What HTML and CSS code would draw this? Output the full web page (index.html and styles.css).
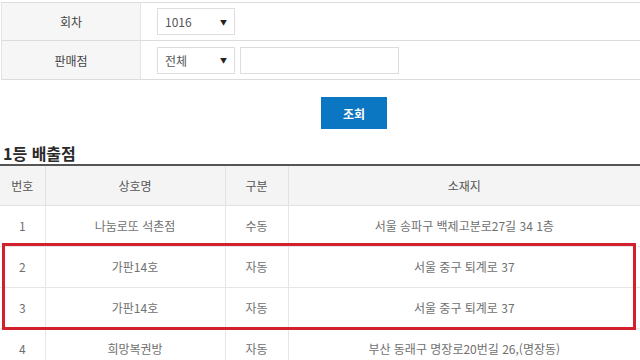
FILE: index.html
```html
<!DOCTYPE html>
<html lang="ko">
<head>
<meta charset="utf-8">
<link rel="stylesheet" href="styles.css">
</head>
<body>
<div class="page">
  <table class="search">
    <tr class="r1">
      <th>회차</th>
      <td>
        <div class="field">
          <div class="select w78"><span>1016</span><span class="caret">▼</span></div>
        </div>
      </td>
    </tr>
    <tr class="r2">
      <th>판매점</th>
      <td>
        <div class="field">
          <div class="select w78"><span>전체</span><span class="caret">▼</span></div>
          <div class="input"></div>
        </div>
      </td>
    </tr>
  </table>

  <div class="btn-row"><button class="btn">조회</button></div>

  <h3 class="title">1등 배출점</h3>

  <div class="result-wrap">
    <table class="result">
      <colgroup>
        <col class="c1"><col class="c2"><col class="c3"><col class="c4">
      </colgroup>
      <thead>
        <tr><th>번호</th><th>상호명</th><th>구분</th><th>소재지</th></tr>
      </thead>
      <tbody>
        <tr><td>1</td><td>나눔로또 석촌점</td><td>수동</td><td>서울 송파구 백제고분로27길 34 1층</td></tr>
        <tr><td>2</td><td>가판14호</td><td>자동</td><td>서울 중구 퇴계로 37</td></tr>
        <tr><td>3</td><td>가판14호</td><td>자동</td><td>서울 중구 퇴계로 37</td></tr>
        <tr><td>4</td><td>희망복권방</td><td>자동</td><td>부산 동래구 명장로20번길 26,(명장동)</td></tr>
      </tbody>
    </table>
    <div class="highlight"></div>
  </div>
</div>
</body>
</html>
```

FILE: styles.css
```css
* { box-sizing: border-box; }
html, body { margin: 0; padding: 0; background: #fff; }
body {
  font-family: "Noto Sans CJK KR", "Noto Sans", sans-serif;
  font-size: 12px;
  color: #555;
  width: 640px;
  height: 360px;
  overflow: hidden;
}
.page { padding-top: 2px; }

.search {
  width: 640px;
  margin-left: 1px;
  border-collapse: collapse;
  border-top: 1px solid #dcdcdc;
  border-left: 1px solid #e4e4e4;
}
.search th {
  width: 139px;
  background: #f6f6f6;
  font-weight: normal;
  color: #444;
  text-align: center;
  border-right: 1px solid #e4e4e4;
  border-bottom: 1px solid #dcdcdc;
  padding: 0;
}
.search td {
  border-bottom: 1px solid #dcdcdc;
  padding: 0 0 0 16px;
}
.search .r1 th, .search .r1 td { height: 38px; }
.search .r2 th, .search .r2 td { height: 39px; }

.field { display: flex; gap: 5px; align-items: center; }
.select {
  height: 27px;
  border: 1px solid #dedede;
  display: flex;
  align-items: center;
  justify-content: space-between;
  padding: 0 7px 0 7px;
  color: #555;
  font-size: 12px;
}
.w78 { width: 78px; }
.caret { font-size: 7px; color: #222; }
.input {
  width: 159px;
  height: 27px;
  border: 1px solid #dedede;
}

.btn-row {
  display: flex;
  padding: 17px 0 0 321px;
  height: 63px;
}
.btn {
  width: 66px;
  height: 32px;
  border: none;
  background: #0b76c2;
  color: #fff;
  font-family: "Noto Sans CJK KR", sans-serif;
  font-size: 12px;
  font-weight: bold;
  padding: 0;
}

.title {
  margin: 0;
  padding-left: 3px;
  font-size: 16px;
  font-weight: bold;
  color: #2a2a2a;
  line-height: 21px;
  height: 21px;
}

.result-wrap { position: relative; }
.result {
  width: 640px;
  border-collapse: collapse;
  border-top: 2px solid #555;
  table-layout: fixed;
}
.c1 { width: 45px; }
.c2 { width: 180px; }
.c3 { width: 63px; }
.c4 { width: 352px; }
.result th {
  height: 40px;
  background: #f4f4f4;
  font-weight: normal;
  color: #555;
  border-bottom: 1px solid #e2e2e2;
  border-right: 1px solid #e2e2e2;
  padding: 0;
}
.result td {
  height: 41px;
  text-align: center;
  color: #707070;
  border-bottom: 1px solid #e6e6e6;
  border-right: 1px solid #e6e6e6;
  padding: 0;
}
.result th:last-child, .result td:last-child { border-right: none; }

.highlight {
  position: absolute;
  left: 2px;
  top: 79px;
  width: 634px;
  height: 87px;
  border: 3px solid #d2202c;
}
```
